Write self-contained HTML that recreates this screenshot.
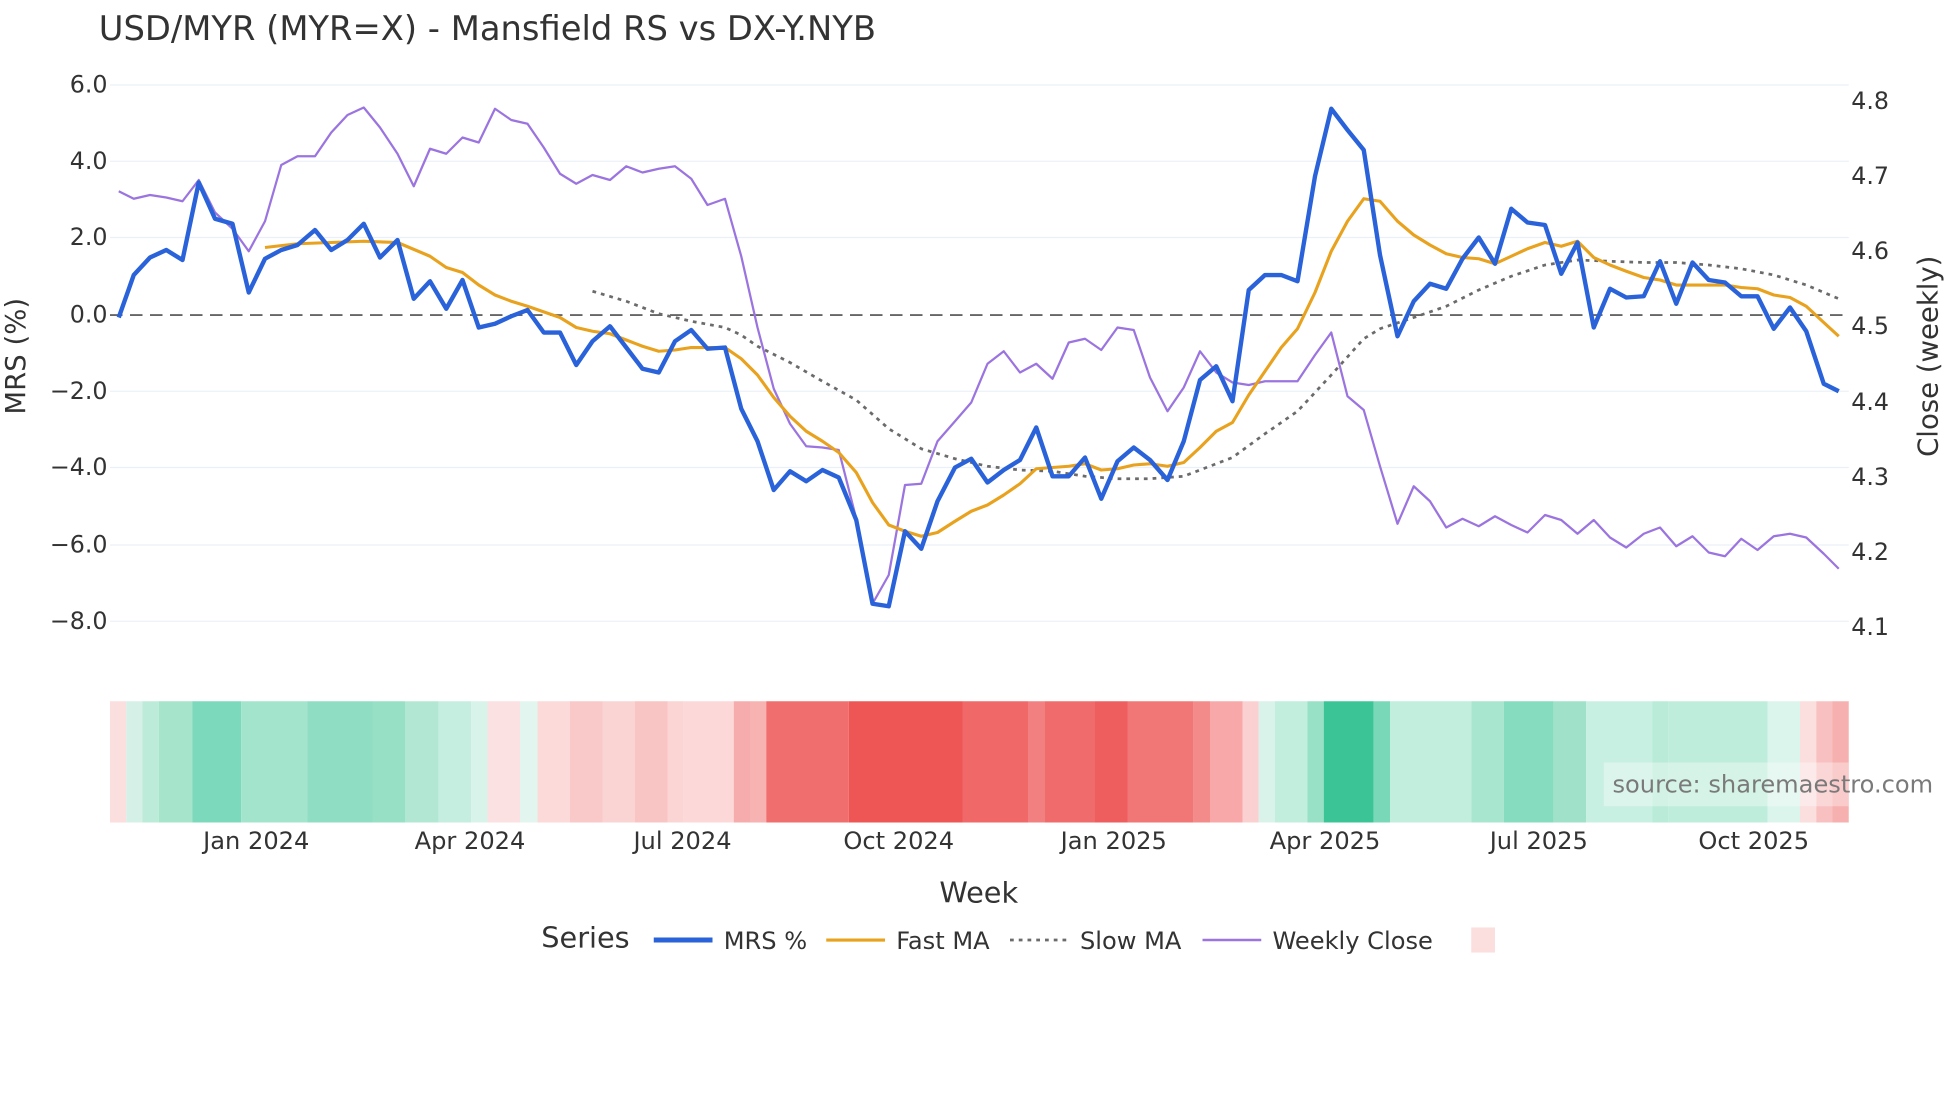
<!DOCTYPE html>
<html><head><meta charset="utf-8"><style>
html,body{margin:0;padding:0;background:#fff;width:1960px;height:1102px;overflow:hidden}
svg{display:block}
text{font-family:"DejaVu Sans","Liberation Sans",sans-serif;fill:#333}
</style></head><body>
<svg width="1960" height="1102" viewBox="0 0 1568 881.6" xmlns="http://www.w3.org/2000/svg">
<rect width="1568" height="882" fill="#fff"/>
<text x="79" y="32" font-size="27" style="fill:#333">USD/MYR (MYR=X) - Mansfield RS vs DX-Y.NYB</text>
<g stroke="#ebf0f8" stroke-width="1">
<line x1="88" x2="1479" y1="68" y2="68"/><line x1="88" x2="1479" y1="129" y2="129"/><line x1="88" x2="1479" y1="190" y2="190"/><line x1="88" x2="1479" y1="313" y2="313"/><line x1="88" x2="1479" y1="374" y2="374"/><line x1="88" x2="1479" y1="436" y2="436"/><line x1="88" x2="1479" y1="497" y2="497"/>
</g>
<line x1="88" x2="1479" y1="252" y2="252" stroke="#666" stroke-width="1.5" stroke-dasharray="10,6"/>
<g font-size="19" text-anchor="end">
<text x="86" y="74">6.0</text><text x="86" y="135">4.0</text><text x="86" y="196">2.0</text><text x="86" y="258">0.0</text><text x="86" y="319">−2.0</text><text x="86" y="380">−4.0</text><text x="86" y="442">−6.0</text><text x="86" y="503">−8.0</text>
</g>
<g font-size="19">
<text x="1481" y="87">4.8</text><text x="1481" y="147">4.7</text><text x="1481" y="207">4.6</text><text x="1481" y="267">4.5</text><text x="1481" y="328">4.4</text><text x="1481" y="388">4.3</text><text x="1481" y="448">4.2</text><text x="1481" y="508">4.1</text>
</g>
<text transform="translate(20,285) rotate(-90)" font-size="22" text-anchor="middle">MRS (%)</text>
<text transform="translate(1550,285) rotate(-90)" font-size="22" text-anchor="middle">Close (weekly)</text>
<g fill="none" stroke-linejoin="round">
<polyline stroke="#9b74e0" stroke-width="1.8" points="95,153 107,159 120,156 133,158 146,161 159,144 172,170 186,183 199,201 212,177 225,132 238,125 252,125 265,106 278,92 291,86 304,102 318,123 331,149 344,119 357,123 370,110 383,114 396,87 409,96 422,99 435,118 448,139 461,147 474,140 488,144 501,133 514,138 527,135 540,133 553,143 566,164 580,159 593,205 606,262 619,311 632,339 645,357 658,358 671,360 685,415 698,483 711,460 724,388 737,387 750,353 764,337 777,322 790,291 803,281 816,298 829,291 842,303 855,274 868,271 881,280 894,262 907,264 920,302 934,329 947,310 960,281 973,298 986,306 999,308 1012,305 1025,305 1038,305 1052,284 1065,266 1078,317 1091,328 1104,373 1118,419 1131,389 1144,401 1157,422 1170,415 1183,421 1196,413 1209,420 1222,426 1236,412 1249,416 1262,427 1275,416 1288,430 1301,438 1315,427 1328,422 1341,437 1354,429 1367,442 1380,445 1393,431 1406,440 1419,429 1432,427 1445,430 1459,443 1471,455"/>
<polyline stroke="#6b6b6b" stroke-width="2.2" stroke-dasharray="3,4" points="474,233 501,241 527,251 553,257 580,262 593,268 606,277 632,290 658,305 685,320 711,343 737,359 764,367 790,373 816,376 842,377 868,381 894,383 920,383 947,381 960,376 986,366 1012,347 1038,329 1065,300 1091,271 1104,263 1131,254 1157,245 1183,232 1209,221 1236,212 1262,208 1288,209 1315,210 1341,210 1367,212 1393,215 1419,220 1445,228 1471,239"/>
<polyline stroke="#e8a21d" stroke-width="2.5" points="212,198 238,195 265,194 291,193 318,194 344,205 357,214 370,218 383,228 396,236 409,241 422,245 448,254 461,262 474,265 488,267 501,272 514,277 527,281 540,280 553,278 580,278 593,287 606,300 619,318 632,333 645,345 658,353 671,362 685,378 698,402 711,420 724,425 737,429 750,426 764,417 777,409 790,404 803,396 816,387 829,375 842,374 855,373 868,371 881,376 894,375 907,372 920,371 934,373 947,370 960,358 973,345 986,338 999,316 1012,297 1025,278 1038,263 1052,234 1065,201 1078,177 1091,159 1104,161 1118,177 1131,188 1144,196 1157,203 1170,206 1183,207 1196,211 1209,205 1222,199 1236,194 1249,197 1262,193 1275,206 1288,212 1301,217 1315,222 1328,224 1341,228 1354,228 1367,228 1380,228 1393,230 1406,231 1419,236 1432,238 1445,245 1459,258 1471,269"/>
<polyline stroke="#2a62d9" stroke-width="3.5" points="95,254 107,220 120,206 133,200 146,208 159,146 172,175 186,179 199,234 212,207 225,200 238,196 252,184 265,200 278,192 291,179 304,206 318,192 331,239 344,225 357,247 370,224 383,262 396,259 409,253 422,248 435,266 448,266 461,292 474,273 488,261 501,278 514,295 527,298 540,273 553,264 566,279 580,278 593,327 606,353 619,392 632,377 645,385 658,376 671,382 685,416 698,483 711,485 724,425 737,439 750,401 764,374 777,367 790,386 803,376 816,368 829,342 842,381 855,381 868,366 881,399 894,369 907,358 920,368 934,384 947,353 960,304 973,293 986,321 999,232 1012,220 1025,220 1038,225 1052,141 1065,87 1078,104 1091,120 1104,204 1118,269 1131,241 1144,227 1157,231 1170,207 1183,190 1196,211 1209,167 1222,178 1236,180 1249,219 1262,194 1275,262 1288,231 1301,238 1315,237 1328,209 1341,243 1354,210 1367,224 1380,226 1393,237 1406,237 1419,263 1432,246 1445,265 1459,307 1471,313"/>
</g>
<g>
<rect x="88" y="561" width="13" height="97" fill="#fbdede"/>
<rect x="101" y="561" width="13" height="97" fill="#d5f0e6"/>
<rect x="114" y="561" width="13" height="97" fill="#bdebd9"/>
<rect x="127" y="561" width="27" height="97" fill="#a6e4cc"/>
<rect x="154" y="561" width="39" height="97" fill="#7dd9bb"/>
<rect x="193" y="561" width="53" height="97" fill="#a3e4cc"/>
<rect x="246" y="561" width="52" height="97" fill="#8fdec3"/>
<rect x="298" y="561" width="26" height="97" fill="#97e0c6"/>
<rect x="324" y="561" width="27" height="97" fill="#b2e8d3"/>
<rect x="351" y="561" width="26" height="97" fill="#c5eee0"/>
<rect x="377" y="561" width="13" height="97" fill="#d8f3ea"/>
<rect x="390" y="561" width="26" height="97" fill="#fbe1e1"/>
<rect x="416" y="561" width="14" height="97" fill="#e2f6ef"/>
<rect x="430" y="561" width="26" height="97" fill="#fcdada"/>
<rect x="456" y="561" width="26" height="97" fill="#f9c9ca"/>
<rect x="482" y="561" width="26" height="97" fill="#fad3d3"/>
<rect x="508" y="561" width="26" height="97" fill="#f8c4c4"/>
<rect x="534" y="561" width="13" height="97" fill="#fbd4d4"/>
<rect x="547" y="561" width="40" height="97" fill="#fcd8d8"/>
<rect x="587" y="561" width="13" height="97" fill="#f6acac"/>
<rect x="600" y="561" width="13" height="97" fill="#f7b2b2"/>
<rect x="613" y="561" width="66" height="97" fill="#f06e6e"/>
<rect x="679" y="561" width="91" height="97" fill="#ee5656"/>
<rect x="770" y="561" width="53" height="97" fill="#f06868"/>
<rect x="823" y="561" width="13" height="97" fill="#f28080"/>
<rect x="836" y="561" width="40" height="97" fill="#f06b6b"/>
<rect x="876" y="561" width="26" height="97" fill="#ee5e5e"/>
<rect x="902" y="561" width="53" height="97" fill="#f17777"/>
<rect x="955" y="561" width="13" height="97" fill="#f38b8b"/>
<rect x="968" y="561" width="26" height="97" fill="#f8a8a8"/>
<rect x="994" y="561" width="13" height="97" fill="#fbd0d0"/>
<rect x="1007" y="561" width="13" height="97" fill="#d9f3ea"/>
<rect x="1020" y="561" width="26" height="97" fill="#c1eedd"/>
<rect x="1046" y="561" width="13" height="97" fill="#98e0c6"/>
<rect x="1059" y="561" width="40" height="97" fill="#3bc596"/>
<rect x="1099" y="561" width="13" height="97" fill="#79d8b8"/>
<rect x="1112" y="561" width="65" height="97" fill="#c1eedd"/>
<rect x="1177" y="561" width="26" height="97" fill="#a9e6cf"/>
<rect x="1203" y="561" width="40" height="97" fill="#86dcbe"/>
<rect x="1243" y="561" width="26" height="97" fill="#9fe2c9"/>
<rect x="1269" y="561" width="53" height="97" fill="#c8f0e2"/>
<rect x="1322" y="561" width="13" height="97" fill="#b9ebd8"/>
<rect x="1335" y="561" width="79" height="97" fill="#bfeddb"/>
<rect x="1414" y="561" width="26" height="97" fill="#dbf5ec"/>
<rect x="1440" y="561" width="13" height="97" fill="#fbdede"/>
<rect x="1453" y="561" width="13" height="97" fill="#f8c0c0"/>
<rect x="1466" y="561" width="13" height="97" fill="#f7b0b0"/>
</g>
<rect x="1283" y="610" width="196" height="35" fill="#fff" fill-opacity="0.35"/>
<text x="1290" y="634" font-size="19.3" style="fill:#7a7a7a">source: sharemaestro.com</text>
<g font-size="19.3" text-anchor="middle">
<text x="205" y="679">Jan 2024</text><text x="376" y="679">Apr 2024</text><text x="546" y="679">Jul 2024</text><text x="719" y="679">Oct 2024</text><text x="891" y="679">Jan 2025</text><text x="1060" y="679">Apr 2025</text><text x="1231" y="679">Jul 2025</text><text x="1403" y="679">Oct 2025</text>
</g>
<text x="783" y="722" font-size="23" text-anchor="middle">Week</text>
<text x="433" y="758" font-size="23">Series</text>
<line x1="523" x2="570" y1="752" y2="752" stroke="#2a62d9" stroke-width="4"/>
<text x="579" y="759" font-size="19.3">MRS %</text>
<line x1="661" x2="708" y1="752" y2="752" stroke="#e8a21d" stroke-width="2.5"/>
<text x="717" y="759" font-size="19.3">Fast MA</text>
<line x1="808" x2="855" y1="752" y2="752" stroke="#6b6b6b" stroke-width="2.2" stroke-dasharray="3,4"/>
<text x="864" y="759" font-size="19.3">Slow MA</text>
<line x1="962" x2="1009" y1="752" y2="752" stroke="#9b74e0" stroke-width="2"/>
<text x="1018" y="759" font-size="19.3">Weekly Close</text>
<rect x="1177" y="742" width="19" height="20" fill="#fbdede"/>
</svg>
</body></html>
